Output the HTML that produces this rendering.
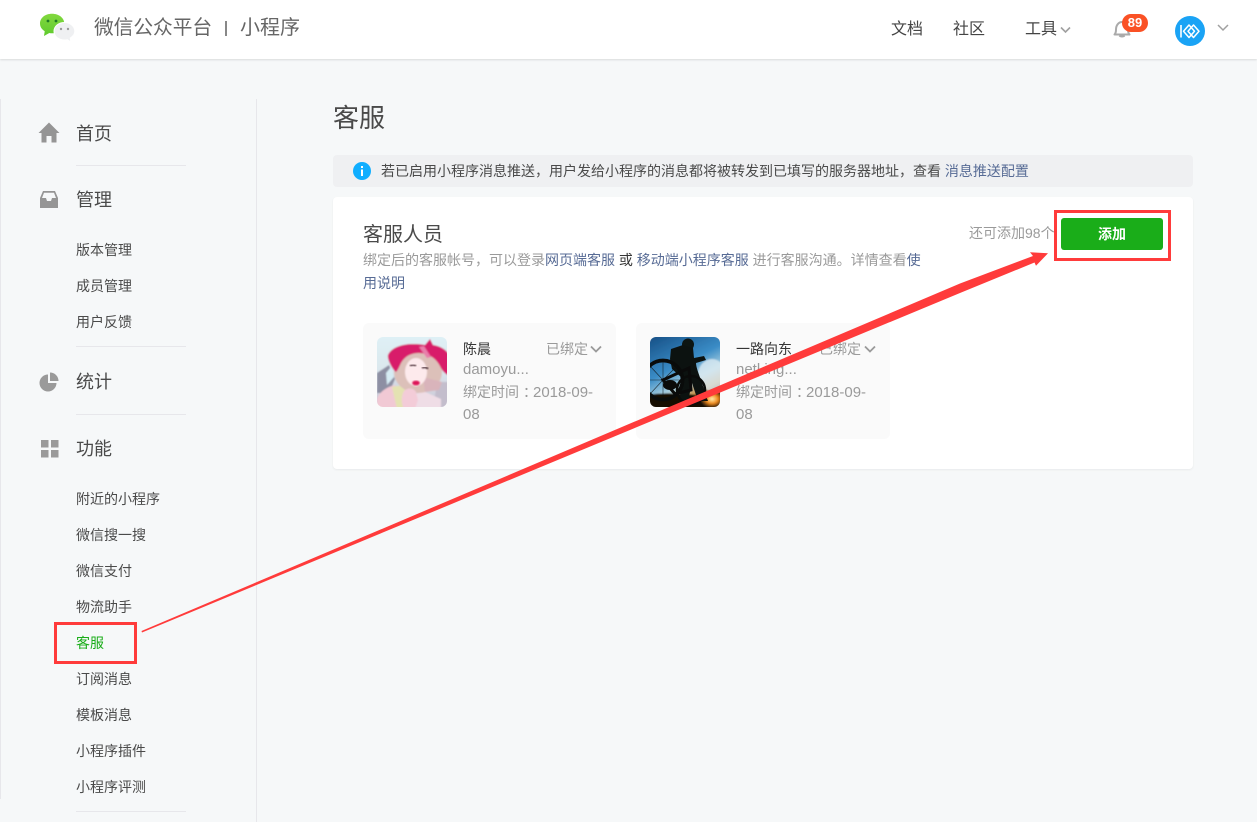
<!DOCTYPE html>
<html lang="zh"><head><meta charset="utf-8"><title>客服</title>
<style>
*{box-sizing:border-box;margin:0;padding:0}
html,body{width:1257px;height:822px;overflow:hidden;background:#f6f8f9}
body{position:relative;font-family:"Liberation Sans","Noto Sans CJK SC",sans-serif;color:#353535}
.t{position:absolute;white-space:nowrap;line-height:20px}
.m{font-size:18px;left:76px;line-height:24px;color:#4a4a4a}
.s{font-size:14px;left:76px;color:#4a4a4a}
.hr{position:absolute;left:76px;width:110px;height:1px;background:#e7e7eb}
svg{position:absolute;overflow:visible}
.g{color:#9a9a9a}.l{color:#576b95}
.n{font-size:15px}
.c{display:inline-block;transform:translateX(4px)}
</style></head><body>
<div style="position:absolute;left:0;top:0;width:1257px;height:59px;background:#fff;box-shadow:0 1px 2px rgba(0,0,0,.12)"></div>
<svg style="left:38px;top:12px" width="40" height="32" viewBox="0 0 40 32"><defs><linearGradient id="lg" x1="0" y1="0" x2="0" y2="1"><stop offset="0" stop-color="#82d83e"/><stop offset="1" stop-color="#5fca2e"/></linearGradient></defs><path d="M14 1.800C7.100 1.800 2 6 2 11.500c0 3.400 1.900 6 4.700 7.700L6 24l5.300-3c.9.200 1.800.300 2.700.300 6.900 0 12.300-4.300 12.300-9.800S20.900 1.800 14 1.800z" fill="url(#lg)"/><circle cx="10" cy="9" r="1.400" fill="#1f7a25"/><circle cx="18" cy="9" r="1.400" fill="#1f7a25"/><path d="M26.500 10.500c-5.900 0-10.500 3.900-10.500 8.800s4.600 8.700 10.500 8.700c.9 0 1.800-.1 2.700-.3l3.600 2.200-.5-3.900c2.700-1.600 4.500-3.900 4.500-6.700 0-4.900-4.400-8.800-10.300-8.800z" fill="#eff0f2" stroke="#fff" stroke-width="1"/><circle cx="23" cy="17" r="1.200" fill="#9a9a9a"/><circle cx="30" cy="17" r="1.200" fill="#9a9a9a"/></svg>
<div class="t" style="left:94px;top:16px;font-size:19.700px;line-height:24px;color:#666">微信公众平台</div>
<div style="position:absolute;left:225px;top:21px;width:1.500px;height:15px;background:#888"></div>
<div class="t" style="left:240px;top:16px;font-size:20px;line-height:24px;color:#666">小程序</div>
<div class="t" style="left:891px;top:20px;font-size:16px;color:#444">文档</div>
<div class="t" style="left:953px;top:20px;font-size:16px;color:#444">社区</div>
<div class="t" style="left:1025px;top:20px;font-size:16px;color:#444">工具</div>
<svg style="left:1060px;top:26px" width="11" height="8"><path d="M1 1.500l4.500 4.500 4.500-4.500" fill="none" stroke="#a0a0a0" stroke-width="1.600"/></svg>
<svg style="left:1112px;top:19px" width="20" height="20" viewBox="0 0 20 20"><path d="M2.500 15.500c1.300-1.300 1.500-2.500 1.500-5 0-4 2.500-7.500 6-7.500s6 3.500 6 7.500c0 2.500.2 3.700 1.500 5z" fill="none" stroke="#aaa" stroke-width="2" stroke-linejoin="round"/><path d="M7.500 16.500c1 1.300 4 1.300 5 0" fill="none" stroke="#aaa" stroke-width="2"/></svg>
<div class="t" style="left:1122px;top:14px;width:26px;height:18px;border-radius:9px;background:#fa5125;color:#fff;font-size:13px;font-weight:700;line-height:17px;text-align:center">89</div>
<svg style="left:1175px;top:16px" width="30" height="30" viewBox="0 0 30 30"><circle cx="15" cy="15" r="15" fill="#1aa3f5"/><path d="M6 9v12.500" stroke="#fff" stroke-width="1.600"/><path d="M14 9L8.500 15.250 14 21.500 19.500 15.250zM18.500 9L13 15.250 18.500 21.500 24 15.250z" fill="none" stroke="#fff" stroke-width="1.500" stroke-linejoin="round"/></svg>
<svg style="left:1217px;top:24px" width="12" height="8"><path d="M1 1l5 5 5-5" fill="none" stroke="#a0a0a0" stroke-width="1.500"/></svg>

<div style="position:absolute;left:0;top:99px;width:1px;height:700px;background:#e7e7eb"></div>
<div style="position:absolute;left:256px;top:99px;width:1px;height:723px;background:#e7e7eb"></div>

<svg style="left:38px;top:122px" width="22" height="22" viewBox="0 0 22 22"><path d="M11 0.500L0.500 11H3.500V20.500H8.500V14H13.500V20.500H18.500V11H21.500z" fill="#959595"/></svg>
<div class="t m" style="top:122px">首页</div>
<div class="hr" style="top:165px"></div>
<svg style="left:40px;top:191px" width="18" height="17" viewBox="0 0 18 17"><path d="M3 0h12l3 7v10H0V7zM4 1.800L2 7h4l1 3h4l1-3h4l-2-5.200z" fill="#959595" fill-rule="evenodd"/></svg>
<div class="t m" style="top:188px">管理</div>
<div class="t s" style="top:239.500px">版本管理</div>
<div class="t s" style="top:275.500px">成员管理</div>
<div class="t s" style="top:311.500px">用户反馈</div>
<div class="hr" style="top:346px"></div>
<svg style="left:40px;top:372px" width="19" height="19" viewBox="0 0 19 19"><path d="M8 2.500A8.500 8.500 0 1 0 16.500 11H8z" fill="#9a9a9a"/><path d="M10 0.500V9h8.500A8.500 8.500 0 0 0 10 0.500z" fill="#9a9a9a"/></svg>
<div class="t m" style="top:370px">统计</div>
<div class="hr" style="top:414px"></div>
<svg style="left:41px;top:440px" width="18" height="18"><rect width="7.500" height="7.500" fill="#9a9a9a"/><rect x="10" width="7.500" height="7.500" fill="#9a9a9a"/><rect y="10" width="7.500" height="7.500" fill="#9a9a9a"/><rect x="10" y="10" width="7.500" height="7.500" fill="#9a9a9a"/></svg>
<div class="t m" style="top:437px">功能</div>
<div class="t s" style="top:488.500px">附近的小程序</div>
<div class="t s" style="top:524.500px">微信搜一搜</div>
<div class="t s" style="top:560.500px">微信支付</div>
<div class="t s" style="top:596.500px">物流助手</div>
<div class="t s" style="top:632.500px;color:#1aad19">客服</div>
<div class="t s" style="top:668.500px">订阅消息</div>
<div class="t s" style="top:704.500px">模板消息</div>
<div class="t s" style="top:740.500px">小程序插件</div>
<div class="t s" style="top:776.500px">小程序评测</div>
<div class="hr" style="top:811px"></div>

<div class="t" style="left:333px;top:101px;font-size:26px;line-height:34px;color:#4a4a4a">客服</div>
<div style="position:absolute;left:333px;top:155px;width:860px;height:32px;background:#eff0f2;border-radius:4px"></div>
<svg style="left:353px;top:162px" width="18" height="18"><circle cx="9" cy="9" r="9" fill="#10aeff"/><rect x="8" y="4" width="2" height="2" fill="#fff"/><rect x="8" y="7.500" width="2" height="6.500" fill="#fff"/></svg>
<div class="t" style="left:381px;top:161px;font-size:14px;color:#4a4a4a">若已启用小程序消息推送，用户发给小程序的消息都将被转发到已填写的服务器地址，查看 <span class="l">消息推送配置</span></div>

<div style="position:absolute;left:333px;top:197px;width:860px;height:272px;background:#fff;border-radius:4px;box-shadow:0 1px 2px rgba(0,0,0,.06)"></div>
<div class="t" style="left:363px;top:222px;font-size:20px;line-height:27px;color:#4a4a4a">客服人员</div>
<div class="t" style="left:363px;top:250px;font-size:14px;color:#9a9a9a">绑定后的客服帐号，可以登录<span class="l">网页端客服</span> <span style="color:#353535">或</span> <span class="l">移动端小程序客服</span> 进行客服沟通。详情查看<span class="l">使</span></div>
<div class="t l" style="left:363px;top:273px;font-size:14px">用说明</div>
<div class="t" style="left:969px;top:223px;font-size:14px;color:#9a9a9a">还可添加98个</div>
<div class="t" style="left:1061px;top:218px;width:102px;height:32px;background:#1aad19;border-radius:3px;color:#fff;font-size:14px;font-weight:700;line-height:32px;text-align:center">添加</div>

<div style="position:absolute;left:363px;top:323px;width:253px;height:116px;background:#fafafa;border-radius:6px"></div>
<svg style="left:377px;top:337px" width="70" height="70" viewBox="0 0 70 70"><defs><clipPath id="a"><rect width="70" height="70" rx="6"/></clipPath><filter id="bl" x="-10%" y="-10%" width="120%" height="120%"><feGaussianBlur stdDeviation="0.900"/></filter><linearGradient id="b1" x1="0" y1="0" x2="0" y2="1"><stop offset="0" stop-color="#dff1f6"/><stop offset=".45" stop-color="#dbe8ee"/><stop offset="1" stop-color="#c8c2d2"/></linearGradient></defs><g clip-path="url(#a)"><g filter="url(#bl)"><rect x="-3" y="-3" width="76" height="76" fill="url(#b1)"/><path d="M0 36l12-8 6 14-6 14H0z" fill="#8d8fa3"/><path d="M9 36l5-6 3 10-7 8z" fill="#d6ecf4"/><path d="M60 45h12v28H56z" fill="#c3bdcc"/><path d="M0 72V62c3-8 10-12 18-14l6 24z" fill="#f1c9d4"/><path d="M15 50c8-2 15-2 21 4l6 18H20z" fill="#e4e2b2"/><path d="M36 58l10-4 18 8v10H38z" fill="#efdde6"/><ellipse cx="41" cy="35" rx="24" ry="21" fill="#dcc0b9"/><path d="M46 40l19 5-3 8-14 2z" fill="#d9b4bb"/><ellipse cx="39" cy="35" rx="11" ry="14" fill="#fdeaec"/><path d="M27 54c4-4 10-3 12 1l2 8-3 9H27c-3-5-3-13 0-18z" fill="#f3ccd8"/><path d="M11 18C15 9 30 5 48 8L53 2l3 6c7 1 14 5 16 10v21c-3-2-6-4-8-8-4-9-12-15-22-15-8 0-14 3-18 10-2 4-3 7-5 9-4-3-9-13-8-17z" fill="#d81a6b"/><path d="M42 10l8 11 4-1-7-11z" fill="#e87eaa"/></g><path d="M33 29q3-2 6 0" stroke="#3d2429" stroke-width="2" fill="none" opacity=".8" filter="url(#bl)"/><path d="M45 31q3-2 6 1" stroke="#3d2429" stroke-width="2" fill="none" opacity=".8" filter="url(#bl)"/><ellipse cx="39" cy="46" rx="3.800" ry="2.400" fill="#dd1558" filter="url(#bl)"/></g></svg>
<div class="t" style="left:463px;top:339px;font-size:14px;color:#353535">陈晨</div>
<div class="t" style="left:546px;top:339px;font-size:14px;color:#9a9a9a">已绑定</div>
<svg style="left:590px;top:345px" width="12" height="9"><path d="M1 1.500l5 5 5-5" fill="none" stroke="#9a9a9a" stroke-width="1.800"/></svg>
<div class="t n" style="left:463px;top:360px;color:#9a9a9a">damoyu...</div>
<div class="t" style="left:463px;top:382px;font-size:14px;color:#9a9a9a">绑定时间<span class="c">：</span><span class="n">2018-09-</span></div>
<div class="t n" style="left:463px;top:405px;color:#9a9a9a">08</div>

<div style="position:absolute;left:636px;top:323px;width:254px;height:116px;background:#fafafa;border-radius:6px"></div>
<svg style="left:650px;top:337px" width="70" height="70" viewBox="0 0 70 70"><defs><clipPath id="c"><rect width="70" height="70" rx="6"/></clipPath><linearGradient id="b2" x1="0" y1="0" x2=".5" y2="1"><stop offset="0" stop-color="#134a80"/><stop offset=".5" stop-color="#3a8cc6"/><stop offset=".72" stop-color="#a9cfe0"/><stop offset=".88" stop-color="#c9964e"/><stop offset="1" stop-color="#2a1606"/></linearGradient><radialGradient id="sun" cx=".5" cy=".5" r=".5"><stop offset="0" stop-color="#fff2b0"/><stop offset=".5" stop-color="#f08a1c"/><stop offset="1" stop-color="#f08a1c" stop-opacity="0"/></radialGradient></defs><g clip-path="url(#c)"><g filter="url(#bl)"><rect x="-3" y="-3" width="76" height="76" fill="url(#b2)"/><ellipse cx="62" cy="38" rx="14" ry="16" fill="#dcebf2" opacity=".8"/><path d="M-2 58c15-3 40-2 74 3v11H-2z" fill="#120c06"/><ellipse cx="62" cy="62" rx="12" ry="9" fill="url(#sun)"/></g><circle cx="38" cy="7.500" r="6" fill="#0d1512"/><path d="M21 12l12-4 10 3 1 10 10-2 2 4-10 3c0 6 6 18 9 30l3 8H48l-6-18-4 18-8-2 1-22-9-8-2-10z" fill="#0c1210"/><circle cx="13" cy="43" r="19.500" fill="none" stroke="#090b0a" stroke-width="3.800"/><g stroke="#0b0e0e" stroke-width=".6" opacity=".8"><path d="M13 43L13 24M13 43L27 29M13 43L32 43M13 43L27 57M13 43L13 62M13 43L0 57M13 43L-6 43M13 43L0 29"/></g><circle cx="41" cy="53" r="14" fill="none" stroke="#0a0b0a" stroke-width="2.500"/><path d="M13 43l26-12 2 22-16 4z" fill="none" stroke="#0a0a0a" stroke-width="3"/><ellipse cx="20" cy="48" rx="7" ry="5" fill="#0b0b0a"/></g></svg>
<div class="t" style="left:736px;top:339px;font-size:14px;color:#353535">一路向东</div>
<div class="t" style="left:819px;top:339px;font-size:14px;color:#9a9a9a">已绑定</div>
<svg style="left:864px;top:345px" width="12" height="9"><path d="M1 1.500l5 5 5-5" fill="none" stroke="#9a9a9a" stroke-width="1.800"/></svg>
<div class="t n" style="left:736px;top:360px;color:#9a9a9a">netl.ing...</div>
<div class="t" style="left:736px;top:382px;font-size:14px;color:#9a9a9a">绑定时间<span class="c">：</span><span class="n">2018-09-</span></div>
<div class="t n" style="left:736px;top:405px;color:#9a9a9a">08</div>

<div style="position:absolute;left:54px;top:622px;width:83px;height:42px;border:3px solid #ff3b3b"></div>
<div style="position:absolute;left:1054px;top:210px;width:117px;height:51px;border:3px solid #ff3b3b"></div>
<svg style="left:0;top:0" width="1257" height="822"><path d="M141.500 631L960 283.500 1033 256 1030 252.300 1048 253.300 1036 265.700 1034.500 262.500 960 293 142 632.500z" fill="#ff3b3b"/></svg>
</body></html>
